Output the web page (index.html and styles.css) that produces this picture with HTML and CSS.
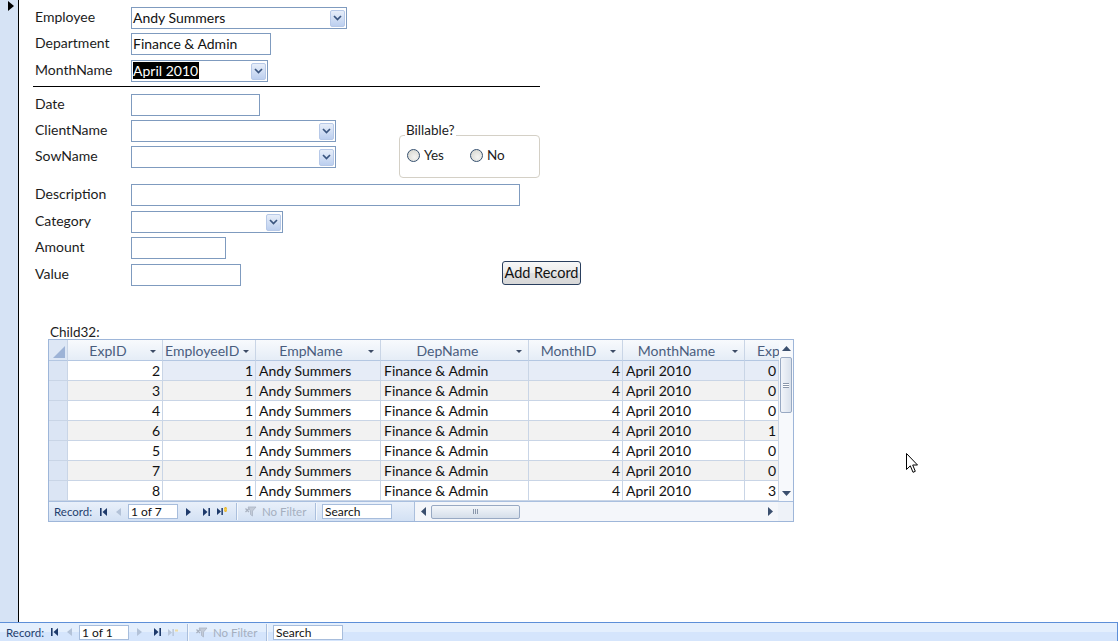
FILE: index.html
```html
<!DOCTYPE html>
<html>
<head>
<meta charset="utf-8">
<title>Expenses</title>
<link rel="stylesheet" href="styles.css">
</head>
<body>
<div class="app">
  <div class="selector">
    <svg class="currec" width="6" height="10" viewBox="0 0 6 10"><path d="M0 0L6 5L0 10Z" fill="#000"/></svg>
  </div>

  <div class="main">
    <div class="stack">
      <div class="row"><span class="lbl">Employee</span>
        <div class="box combo w216"><span class="val">Andy Summers</span>
          <span class="dd"><svg width="9" height="6" viewBox="0 0 9 6"><path d="M1 1L4.5 4.5L8 1" fill="none" stroke="#3a557f" stroke-width="1.7"/></svg></span></div></div>
      <div class="row"><span class="lbl">Department</span>
        <div class="box w140"><span class="val">Finance &amp; Admin</span></div></div>
      <div class="row g5"><span class="lbl">MonthName</span>
        <div class="box combo w137"><span class="val sel">April 2010</span>
          <span class="dd"><svg width="9" height="6" viewBox="0 0 9 6"><path d="M1 1L4.5 4.5L8 1" fill="none" stroke="#3a557f" stroke-width="1.7"/></svg></span></div></div>
    </div>

    <div class="divider"></div>

    <div class="sec2">
      <div class="stack">
        <div class="row"><span class="lbl">Date</span><div class="box w129"></div></div>
        <div class="row"><span class="lbl">ClientName</span>
          <div class="box combo w205"><span class="dd"><svg width="9" height="6" viewBox="0 0 9 6"><path d="M1 1L4.5 4.5L8 1" fill="none" stroke="#3a557f" stroke-width="1.7"/></svg></span></div></div>
        <div class="row"><span class="lbl">SowName</span>
          <div class="box combo w205"><span class="dd"><svg width="9" height="6" viewBox="0 0 9 6"><path d="M1 1L4.5 4.5L8 1" fill="none" stroke="#3a557f" stroke-width="1.7"/></svg></span></div></div>
      </div>
      <div class="group">
        <span class="legend">Billable?</span>
        <label class="opt"><span class="radio"></span>Yes</label>
        <label class="opt no"><span class="radio"></span>No</label>
      </div>
    </div>

    <div class="stack sec3">
      <div class="row"><span class="lbl">Description</span><div class="box w389"></div></div>
      <div class="row g5"><span class="lbl">Category</span>
        <div class="box combo w152"><span class="dd"><svg width="9" height="6" viewBox="0 0 9 6"><path d="M1 1L4.5 4.5L8 1" fill="none" stroke="#3a557f" stroke-width="1.7"/></svg></span></div></div>
      <div class="sec3b">
        <div class="stack">
          <div class="row"><span class="lbl">Amount</span><div class="box w95"></div></div>
          <div class="row g5"><span class="lbl">Value</span><div class="box w110"></div></div>
        </div>
        <button class="btn">Add Record</button>
      </div>
    </div>

    <div class="subform">
      <div class="sublabel">Child32:</div>
      <div class="sheet">
        <div class="grid">
          <div class="cols">
            <div class="hdr">
              <div class="c sa"><svg width="12" height="12" viewBox="0 0 12 12"><path d="M12 0L12 12L0 12Z" fill="#9db3d6"/></svg></div>
              <div class="c"><span class="ht">ExpID</span><span class="ha"></span></div>
              <div class="c"><span class="ht">EmployeeID</span><span class="ha"></span></div>
              <div class="c"><span class="ht">EmpName</span><span class="ha"></span></div>
              <div class="c"><span class="ht">DepName</span><span class="ha"></span></div>
              <div class="c"><span class="ht">MonthID</span><span class="ha"></span></div>
              <div class="c"><span class="ht">MonthName</span><span class="ha"></span></div>
              <div class="c exph"><span class="ht">Exp</span></div>
            </div>
            <div class="dr cur"><div class="c s"></div><div class="c n act">2</div><div class="c n">1</div><div class="c t">Andy Summers</div><div class="c t">Finance &amp; Admin</div><div class="c n">4</div><div class="c t">April 2010</div><div class="c n">0</div></div>
            <div class="dr alt"><div class="c s"></div><div class="c n">3</div><div class="c n">1</div><div class="c t">Andy Summers</div><div class="c t">Finance &amp; Admin</div><div class="c n">4</div><div class="c t">April 2010</div><div class="c n">0</div></div>
            <div class="dr"><div class="c s"></div><div class="c n">4</div><div class="c n">1</div><div class="c t">Andy Summers</div><div class="c t">Finance &amp; Admin</div><div class="c n">4</div><div class="c t">April 2010</div><div class="c n">0</div></div>
            <div class="dr alt"><div class="c s"></div><div class="c n">6</div><div class="c n">1</div><div class="c t">Andy Summers</div><div class="c t">Finance &amp; Admin</div><div class="c n">4</div><div class="c t">April 2010</div><div class="c n">1</div></div>
            <div class="dr"><div class="c s"></div><div class="c n">5</div><div class="c n">1</div><div class="c t">Andy Summers</div><div class="c t">Finance &amp; Admin</div><div class="c n">4</div><div class="c t">April 2010</div><div class="c n">0</div></div>
            <div class="dr alt"><div class="c s"></div><div class="c n">7</div><div class="c n">1</div><div class="c t">Andy Summers</div><div class="c t">Finance &amp; Admin</div><div class="c n">4</div><div class="c t">April 2010</div><div class="c n">0</div></div>
            <div class="dr"><div class="c s"></div><div class="c n">8</div><div class="c n">1</div><div class="c t">Andy Summers</div><div class="c t">Finance &amp; Admin</div><div class="c n">4</div><div class="c t">April 2010</div><div class="c n">3</div></div>
          </div>
          <div class="vscroll">
            <span class="sarrow"><svg width="9" height="5" viewBox="0 0 9 5"><path d="M0 5L4.5 0L9 5Z" fill="#3b4f6e"/></svg></span>
            <div class="vtrack"><div class="vthumb"><span class="grip-h"></span></div></div>
            <span class="sarrow"><svg width="9" height="5" viewBox="0 0 9 5"><path d="M0 0L4.5 5L9 0Z" fill="#3b4f6e"/></svg></span>
          </div>
        </div>
        <div class="nav sheetnav">
          <span class="navlbl">Record:</span>
          <span class="ic w14"><svg width="7" height="8" viewBox="0 0 7 8"><rect x="0" y="0" width="1.6" height="8" fill="#1e3a6b"/><path d="M7 0L2.5 4L7 8Z" fill="#1e3a6b"/></svg></span>
          <span class="ic w17"><svg width="5" height="8" viewBox="0 0 5 8"><path d="M5 0L0 4L5 8Z" fill="#b3c2d8"/></svg></span>
          <span class="navinput">1 of 7</span>
          <span class="ic w20"><svg width="5" height="8" viewBox="0 0 5 8"><path d="M0 0L5 4L0 8Z" fill="#1e3a6b"/></svg></span>
          <span class="ic w16"><svg width="7" height="8" viewBox="0 0 7 8"><path d="M0 0L4.5 4L0 8Z" fill="#1e3a6b"/><rect x="5.4" y="0" width="1.6" height="8" fill="#1e3a6b"/></svg></span>
          <span class="ic w16"><svg width="11" height="9" viewBox="0 0 11 9"><path d="M0 1L4 4.5L0 8Z" fill="#1e3a6b"/><rect x="4.4" y="1" width="1.5" height="7" fill="#1e3a6b"/><path d="M7 1.5h3M7 3.5h3M8.5 0v5" stroke="#e8b431" stroke-width="1.6"/><rect x="7" y="1.5" width="3" height="2" fill="#f4cf52"/></svg></span>
          <span class="sep"></span>
          <span class="filt"><svg width="13" height="11" viewBox="0 0 13 11"><path d="M3 1L11 1L7.5 5L7.5 10L5.5 8.5L5.5 5Z" fill="#c3cbd8" stroke="#aab4c4" stroke-width="0.8"/><path d="M0.5 2.5L4 6M4 2.5L0.5 6" stroke="#a9b2c1" stroke-width="1.3"/></svg></span>
          <span class="nofilt">No Filter</span>
          <span class="sep s2"></span>
          <span class="search">Search</span>
          <span class="sep s3"></span>
          <div class="hscroll">
            <span class="harrow"><svg width="5" height="9" viewBox="0 0 5 9"><path d="M5 0L0 4.5L5 9Z" fill="#3b4f6e"/></svg></span>
            <div class="hthumb"><span class="grip-v"></span></div>
            <span class="hfill"></span>
            <span class="harrow"><svg width="5" height="9" viewBox="0 0 5 9"><path d="M0 0L5 4.5L0 9Z" fill="#3b4f6e"/></svg></span>
          </div>
          <span class="corner"></span>
        </div>
      </div>
    </div>
  </div>

  <div class="nav formnav">
    <span class="navlbl">Record:</span>
    <span class="ic w14"><svg width="7" height="8" viewBox="0 0 7 8"><rect x="0" y="0" width="1.6" height="8" fill="#1e3a6b"/><path d="M7 0L2.5 4L7 8Z" fill="#1e3a6b"/></svg></span>
    <span class="ic w17"><svg width="5" height="8" viewBox="0 0 5 8"><path d="M5 0L0 4L5 8Z" fill="#b3c2d8"/></svg></span>
    <span class="navinput">1 of 1</span>
    <span class="ic w20"><svg width="5" height="8" viewBox="0 0 5 8"><path d="M0 0L5 4L0 8Z" fill="#b3c2d8"/></svg></span>
    <span class="ic w16"><svg width="7" height="8" viewBox="0 0 7 8"><path d="M0 0L4.5 4L0 8Z" fill="#1e3a6b"/><rect x="5.4" y="0" width="1.6" height="8" fill="#1e3a6b"/></svg></span>
    <span class="ic w16"><svg width="11" height="9" viewBox="0 0 11 9"><path d="M0 1L4 4.5L0 8Z" fill="#b9c6da"/><rect x="4.4" y="1" width="1.5" height="7" fill="#b9c6da"/><rect x="7" y="1.5" width="3" height="2" fill="#ecdca6"/></svg></span>
    <span class="sep"></span>
    <span class="filt"><svg width="13" height="11" viewBox="0 0 13 11"><path d="M3 1L11 1L7.5 5L7.5 10L5.5 8.5L5.5 5Z" fill="#c3cbd8" stroke="#aab4c4" stroke-width="0.8"/><path d="M0.5 2.5L4 6M4 2.5L0.5 6" stroke="#a9b2c1" stroke-width="1.3"/></svg></span>
    <span class="nofilt">No Filter</span>
    <span class="sep s2"></span>
    <span class="search">Search</span>
  </div>

  <svg class="pointer" width="13" height="21" viewBox="0 0 13 21"><path d="M0.5 0.5L0.5 16.5L4.3 12.8L7 19.3L9.3 18.3L6.7 12L11.5 12Z" fill="#fff" stroke="#000" stroke-width="1"/></svg>
</div>
</body>
</html>
```

FILE: styles.css
```css
html, body {
  margin: 0;
  padding: 0;
  background: #fff;
}
body {
  font-family: Lato, "Open Sans", sans-serif;
  font-size: 14px;
  color: #1c1c1c;
}
.app {
  position: relative;
  width: 1118px;
  height: 641px;
  overflow: hidden;
  display: grid;
  grid-template-columns: 19px 1fr;
  grid-template-rows: 622px 19px;
}
.selector {
  background: #d6e3f5;
  border-right: 1px solid #000;
  position: relative;
}
.currec {
  display: block;
  margin: 1px 0 0 8px;
}
.main {
  padding: 7px 0 0 16px;
}
.stack {
  display: flex;
  flex-direction: column;
  gap: 4px;
}
.row {
  display: flex;
  align-items: center;
  height: 22px;
}
.row.g5 { margin-top: 1px; }
.lbl {
  width: 96px;
  flex: none;
  line-height: 20px;
  padding-bottom: 2px;
}
.box {
  height: 22px;
  box-sizing: border-box;
  border: 1px solid #7f9bbf;
  display: flex;
  align-items: center;
  padding-left: 1px;
  background: #fff;
}
.w216 { width: 216px; }
.w140 { width: 140px; }
.w137 { width: 137px; }
.w129 { width: 129px; }
.w205 { width: 205px; }
.w389 { width: 389px; }
.w152 { width: 152px; }
.w95 { width: 95px; }
.w110 { width: 110px; }
.val {
  white-space: nowrap;
  line-height: 17px;
  height: 17px;
  color: #111;
  margin-bottom: 1px;
}
.val.sel {
  background: #000;
  color: #fff;
  padding-right: 1px;
}
.dd {
  margin-left: auto;
  margin-right: 1px;
  width: 15px;
  height: 17px;
  box-sizing: border-box;
  border: 1px solid #b7c9e8;
  border-radius: 2px;
  background: linear-gradient(#e7eef9, #bccfef);
  display: flex;
  align-items: center;
  justify-content: center;
}
.dd svg { display: block; }

.divider {
  margin: 4px 0 7px -2px;
  width: 507px;
  height: 1px;
  background: #000;
}

.sec2 {
  display: flex;
  align-items: flex-start;
}
.group {
  position: relative;
  margin: 41px 0 -10px 63px;
  width: 141px;
  height: 43px;
  box-sizing: border-box;
  border: 1px solid #d4d0c6;
  border-radius: 4px;
  display: flex;
  align-items: center;
  padding: 0 0 3px 7px;
}
.legend {
  position: absolute;
  left: 5px;
  top: -13px;
  line-height: 14px;
  padding: 0 1px;
  background: #fff;
  font-size: 13.5px;
}
.opt {
  display: flex;
  align-items: center;
  width: 63px;
  font-size: 13.5px;
}
.opt.no { width: auto; }
.radio {
  width: 13px;
  height: 13px;
  box-sizing: border-box;
  border-radius: 50%;
  border: 1px solid #36506f;
  background: radial-gradient(circle at 60% 65%, #f4f4f2 0, #dcdcd6 70%, #c9cac6 100%);
  margin-right: 4px;
}

.sec3 { margin-top: 16px; }
.sec3b {
  display: flex;
  align-items: flex-end;
}
.btn {
  margin: 0 0 1px 261px;
  width: 79px;
  height: 24px;
  box-sizing: border-box;
  border: 1px solid #2a3f5e;
  border-radius: 3px;
  background: linear-gradient(#f7f7f7 0, #ececec 50%, #dedede 51%, #d8d8d8 100%);
  font-family: Lato, "Open Sans", sans-serif;
  font-size: 14.5px;
  color: #111;
  padding: 0 0 2px;
}

.subform {
  margin: 40px 0 0 13px;
}
.sublabel {
  margin-left: 2px;
  line-height: 13px;
  font-size: 13.5px;
}
.sheet {
  width: 746px;
  height: 183px;
  box-sizing: border-box;
  border: 1px solid #9eb6d9;
  display: flex;
  flex-direction: column;
}
.grid {
  display: flex;
  height: 161px;
}
.cols {
  width: 730px;
  overflow: hidden;
}
.hdr, .dr {
  display: grid;
  grid-template-columns: 19px 95px 93px 125px 148px 94px 122px 34px;
}
.hdr {
  height: 21px;
  background: linear-gradient(#f8fafd, #e4ecf6);
}
.c {
  box-sizing: border-box;
  border-right: 1px solid #c9d5e6;
  border-bottom: 1px solid #c9d5e6;
  overflow: hidden;
  white-space: nowrap;
  display: flex;
  align-items: center;
}
.hdr .c {
  border-bottom-color: #b4c7e2;
  color: #4a5d7e;
}
.hdr .sa {
  background: #dde7f5;
  justify-content: flex-end;
  align-items: flex-end;
  padding: 0 2px 2px 0;
}
.ht {
  flex: 1;
  min-width: 0;
  overflow: hidden;
  text-align: center;
  padding-left: 2px;
}
.ha {
  flex: none;
  width: 0;
  height: 0;
  border-left: 3px solid transparent;
  border-right: 3px solid transparent;
  border-top: 3px solid #3d4c66;
  margin: 2px 6px 0 4px;
}
.exph .ht {
  text-align: left;
  padding-left: 12px;
}
.exph { border-right: none; }
.dr {
  height: 20px;
  color: #111;
}
.dr.alt { background: #f2f2f2; }
.dr.cur { background: #e6ecf7; }
.dr .act { background: #fff; }
.dr .s { background: #dbe5f4; }
.c.n {
  justify-content: flex-end;
  padding-right: 2px;
}
.c.t { padding-left: 3px; }

.vscroll {
  width: 14px;
  background: #f7f9fc;
  display: flex;
  flex-direction: column;
  align-items: center;
}
.sarrow {
  height: 16px;
  display: flex;
  align-items: center;
  justify-content: center;
}
.vtrack {
  flex: 1;
  width: 100%;
}
.vthumb {
  margin: 1px 1px 0 1px;
  height: 56px;
  box-sizing: border-box;
  border: 1px solid #98a9c3;
  border-radius: 2px;
  background: linear-gradient(90deg, #f2f5fa, #d9e1ec);
  display: flex;
  align-items: center;
  justify-content: center;
}
.grip-h {
  width: 6px;
  height: 5px;
  border-top: 1px solid #8a97ab;
  border-bottom: 1px solid #8a97ab;
  background: linear-gradient(#fff 0, #fff 40%, #8a97ab 40%, #8a97ab 60%, #fff 60%);
  box-sizing: border-box;
}

.nav {
  display: flex;
  align-items: center;
  font-size: 11.5px;
  color: #1f3e6e;
  padding-left: 5px;
  box-sizing: border-box;
}
.sheetnav {
  height: 20px;
  border-top: 1px solid #a9bfdf;
  background: linear-gradient(#e9f0fa, #d3e1f4);
}
.formnav {
  grid-column: 1 / 3;
  height: 19px;
  border-top: 1px solid #5d8fd8;
  border-right: 1px solid #5d8fd8;
  background: linear-gradient(#e4effd 0, #e4effd 50%, #d5e5fc 50%, #d5e5fc 100%);
  padding-left: 6px;
}
.navlbl {
  width: 42px;
  flex: none;
}
.formnav .navlbl { width: 41px; }
.ic {
  flex: none;
  display: flex;
  align-items: center;
  justify-content: center;
  height: 16px;
}
.ic svg { display: block; }
.w14 { width: 14px; }
.w16 { width: 16px; }
.w17 { width: 17px; }
.w20 { width: 20px; }
.navinput {
  flex: none;
  width: 50px;
  height: 15px;
  box-sizing: border-box;
  margin-left: 1px;
  border: 1px solid #a7bddc;
  background: #fff;
  color: #111;
  font-size: 12px;
  line-height: 13px;
  padding-left: 2px;
}
.sep {
  flex: none;
  width: 1px;
  height: 17px;
  background: #aabfdd;
  margin: 0 6px;
  box-shadow: 1px 0 0 #f4f8fd;
}
.filt {
  flex: none;
  width: 13px;
  margin-left: 2px;
  display: flex;
}
.nofilt {
  flex: none;
  margin-left: 4px;
  color: #a5afbf;
  width: 45px;
}
.sep.s2 { margin: 0 6px 0 8px; }
.search {
  flex: none;
  width: 70px;
  height: 15px;
  box-sizing: border-box;
  border: 1px solid #a7bddc;
  background: #fff;
  color: #111;
  font-size: 12px;
  line-height: 13px;
  padding-left: 2px;
}
.sep.s3 { margin: 0 0 0 22px; height: 19px; }
.hscroll {
  flex: none;
  width: 363px;
  height: 19px;
  display: flex;
  align-items: center;
  background: #f4f6fa;
}
.harrow {
  width: 16px;
  display: flex;
  justify-content: center;
}
.hthumb {
  width: 89px;
  height: 14px;
  box-sizing: border-box;
  border: 1px solid #98a9c3;
  border-radius: 2px;
  background: linear-gradient(#f3f6fa, #d5deea);
  display: flex;
  align-items: center;
  justify-content: center;
}
.grip-v {
  width: 5px;
  height: 5px;
  background: repeating-linear-gradient(90deg, #8a97ab 0, #8a97ab 1px, transparent 1px, transparent 2px);
}
.hfill { flex: 1; }
.corner {
  flex: 1;
  height: 19px;
  background: #eef2f8;
}

.pointer {
  position: absolute;
  left: 906px;
  top: 453px;
}
```
